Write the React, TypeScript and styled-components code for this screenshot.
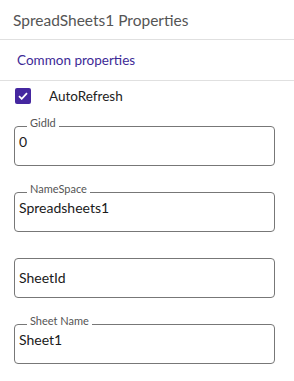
import React from 'react';
import styled, { createGlobalStyle } from 'styled-components';

const GlobalStyle = createGlobalStyle`
  html, body {
    margin: 0;
    padding: 0;
    background: #fff;
  }
  body {
    font-family: Lato, "Noto Sans", "Liberation Sans", sans-serif;
  }
`;

const Panel = styled.div`
  width: 294px;
  height: 381px;
  overflow: hidden;
  background: #fff;
`;

const Header = styled.div`
  height: 39px;
  display: flex;
  align-items: center;
  padding-left: 13px;
  border-bottom: 1px solid #e0e0e0;
  font-size: 15.5px;
  color: #555;
`;

const Section = styled.div`
  height: 40px;
  display: flex;
  align-items: center;
  padding-left: 17px;
  border-bottom: 1px solid #e0e0e0;
  font-size: 13.5px;
  color: #3d2a96;
`;

const CheckRow = styled.label`
  display: flex;
  align-items: center;
  gap: 18px;
  height: 17px;
  padding: 6px 0 0 15px;
  font-size: 13.5px;
  color: #222;
`;

const Box = styled.span`
  width: 16px;
  height: 16px;
  border-radius: 2px;
  background: #4527a0;
  display: flex;
  align-items: center;
  justify-content: center;
`;

const Fields = styled.div`
  display: flex;
  flex-direction: column;
  gap: 17px;
  padding: 13px 19px 0 14px;
`;

const Field = styled.fieldset<{ $bare?: boolean }>`
  margin: ${(p) => (p.$bare ? '9px 0 0' : '0')};
  padding: 0 4px;
  min-width: 0;
  border: 1px solid #777;
  border-radius: 4px;
`;

const Legend = styled.legend`
  margin-left: 8px;
  padding: 0 3px 6px;
  font-size: 11px;
  line-height: 12px;
  color: #555;
`;

const Value = styled.div<{ $bare?: boolean }>`
  height: ${(p) => (p.$bare ? '38px' : '13px')};
  line-height: ${(p) => (p.$bare ? '38px' : '13px')};
  margin-bottom: ${(p) => (p.$bare ? '0' : '17px')};
  font-size: 14px;
  color: #1a1a1a;
`;

const fields = [
  { label: 'GidId', value: '0' },
  { label: 'NameSpace', value: 'Spreadsheets1' },
  { label: '', value: 'SheetId' },
  { label: 'Sheet Name', value: 'Sheet1' },
];

export default function App() {
  return (
    <Panel>
      <GlobalStyle />
      <Header>SpreadSheets1 Properties</Header>
      <Section>Common properties</Section>
      <CheckRow>
        <Box>
          <svg width="10" height="8" viewBox="0 0 10 8">
            <path d="M1 4.2 L3.7 6.8 L9 1.2" fill="none" stroke="#fff" strokeWidth="1.8" />
          </svg>
        </Box>
        AutoRefresh
      </CheckRow>
      <Fields>
        {fields.map((f) => (
          <Field key={f.value} $bare={!f.label}>
            {f.label && <Legend>{f.label}</Legend>}
            <Value $bare={!f.label}>{f.value}</Value>
          </Field>
        ))}
      </Fields>
    </Panel>
  );
}
